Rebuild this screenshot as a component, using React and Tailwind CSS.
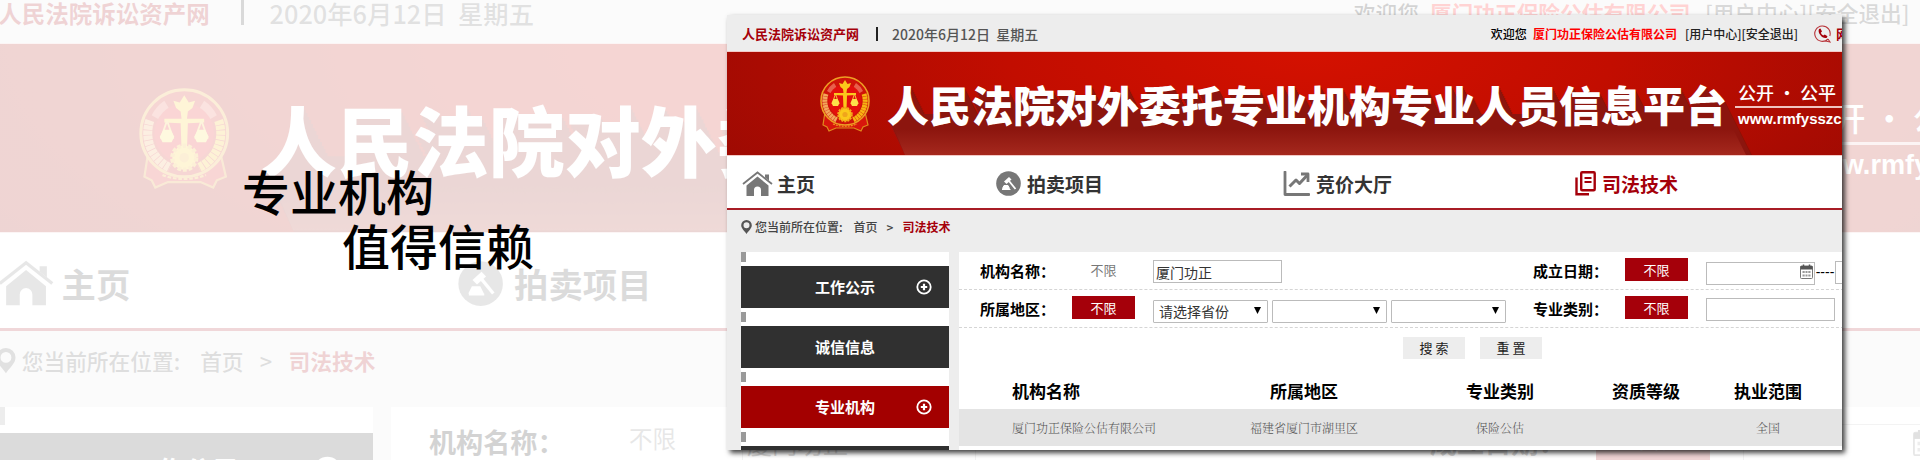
import React, { useId } from "react";

const sans = "font-['Noto_Sans_CJK_SC','Open_Sans',sans-serif]";

/* Diagonal long shadow cast by the banner title. */
const longShadow = Array.from({ length: 30 }, (_, i) => `${i + 1}px ${(i + 1) * 2}px 0 #8c150e`).join(",");

function Emblem() {
  return (
    <svg viewBox="0 0 50 56" className="relative h-[56px] w-[50px] shrink-0" aria-hidden="true">
      <path d="M5 36 L3 49 L7 51 L9 55 L16 52 L34 52 L41 55 L43 51 L48 49 L45 36 Z" fill="#d8150c" stroke="#e08a1c" strokeWidth="1.2" />
      <circle cx="25" cy="25" r="24" fill="#cf1409" stroke="#eda024" strokeWidth="1.6" />
      <path d="M14 7 A21 21 0 0 0 7 15 L12 18 A16 16 0 0 1 17 12 Z M36 7 A21 21 0 0 1 43 15 L38 18 A16 16 0 0 0 33 12 Z" fill="#e8604c" />
      <path d="M6 18 A21 21 0 0 0 17 44" fill="none" stroke="#f3a65a" strokeWidth="5" strokeDasharray="2.4 .4" />
      <path d="M44 18 A21 21 0 0 1 33 44" fill="none" stroke="#f7b512" strokeWidth="5" strokeDasharray="2.4 .4" />
      <circle cx="25" cy="25" r="16.5" fill="#e30f0c" />
      <path d="M25 4 L27.5 8 L31 7 L29.5 11 L27 13 L26.5 17 L36 17 L36 19 L27 19.5 L26.5 34 L23.5 34 L23 19.5 L14 19 L14 17 L23.5 17 L23 13 L20.5 11 L19 7 L22.5 8 Z" fill="#fbc81b" />
      <path d="M15.5 18 L12 28 M15.5 18 L19 28 M34.5 18 L31 28 M34.5 18 L38 28" stroke="#f7c33a" strokeWidth="1" />
      <path d="M13.5 23 H17.5 L19.5 27 L18 30 H13 L11.5 27 Z M32.5 23 H36.5 L38.5 27 L37 30 H32 L30.5 27 Z" fill="#fde04a" />
      <circle cx="25" cy="38.5" r="6.6" fill="#fbc81b" stroke="#f3a81a" strokeWidth="2.4" strokeDasharray="2 1" />
      <circle cx="25" cy="38.5" r="2.6" fill="#f0a51c" />
      <path d="M13 48 C20 51 30 51 37 48" fill="none" stroke="#f0a020" strokeWidth="1.2" strokeDasharray="2 1" />
    </svg>
  );
}

function HomeIcon() {
  return (
    <svg viewBox="0 0 31 26" className="h-[26px] w-[31px]" aria-hidden="true">
      <path d="M1 13 L15.5 1.5 L30 13" fill="none" stroke="#777" strokeWidth="1.8" />
      <path d="M23 3.5 H27 V9.5 L23 6.5 Z" fill="#777" />
      <path d="M15.5 5.5 L26.5 14.5 V25 H19 V19 A3.5 3.5 0 0 0 12 19 V25 H4.5 V14.5 Z" fill="#777" />
    </svg>
  );
}

function GavelIcon() {
  return (
    <svg viewBox="0 0 25 25" className="size-[25px]" aria-hidden="true">
      <circle cx="12.5" cy="12.5" r="12.3" fill="#777" />
      <path d="M8 10.5 L13 6 L15.5 8.5 L10.5 13 Z" fill="#fff" />
      <path d="M13 10 L19.5 18" stroke="#fff" strokeWidth="1.8" />
      <path d="M8 14.5 H12 L13.5 17.5 H6.5 Z M6 18.5 H14.5" fill="#fff" stroke="#fff" strokeWidth="1" />
    </svg>
  );
}

function ChartIcon() {
  return (
    <svg viewBox="0 0 27 25" className="h-[25px] w-[27px]" fill="none" stroke="#777" aria-hidden="true">
      <path d="M2 1 V23.5 H26" strokeWidth="2.8" strokeLinecap="round" strokeLinejoin="round" />
      <path d="M6.5 15.5 L13 9 L16.5 12.5 L24 4.5" strokeWidth="3" strokeLinejoin="round" />
      <path d="M18 3 H25 V11" strokeWidth="2.8" strokeLinejoin="round" />
    </svg>
  );
}

function DocsIcon() {
  return (
    <svg viewBox="0 0 21 25" className="h-[25px] w-[21px]" fill="none" stroke="#a5000a" aria-hidden="true">
      <rect x="6.2" y="1.2" width="13.5" height="18" rx="1" strokeWidth="2.4" />
      <path d="M9.5 7 H16.5 M9.5 11 H16.5" strokeWidth="1.8" />
      <path d="M1.5 6.5 V23.3 H14" strokeWidth="2.4" />
    </svg>
  );
}

function PlusIcon() {
  return (
    <svg viewBox="0 0 16 16" className="size-[16px]" fill="none" stroke="#fff" strokeWidth="1.8" aria-hidden="true">
      <circle cx="8" cy="8" r="6.7" />
      <path d="M8 4.8 V11.2 M4.8 8 H11.2" strokeWidth="2.2" />
    </svg>
  );
}

function PinIcon() {
  return (
    <svg viewBox="0 0 11 14" className="h-[14px] w-[11px]" aria-hidden="true">
      <path d="M5.5 0 A5.3 5.3 0 0 1 10.8 5.3 C10.8 8.5 7.5 11 5.5 14 C3.5 11 .2 8.5 .2 5.3 A5.3 5.3 0 0 1 5.5 0 Z M5.5 2.2 A3 3 0 1 0 5.5 8.2 A3 3 0 1 0 5.5 2.2 Z" fill="#555" fillRule="evenodd" />
    </svg>
  );
}

function PhoneIcon() {
  return (
    <svg viewBox="0 0 17 18" className="h-[18px] w-[17px]" aria-hidden="true">
      <path d="M14 14 A7.7 7.7 0 1 1 15.8 11 M14 14 L16 17 L11.5 16" fill="none" stroke="#b8343a" strokeWidth="1.1" />
      <path d="M5 4 L6.5 3.5 L8 6.5 L6.8 7.8 C7.3 9 8.2 10 9.4 10.6 L10.7 9.5 L13.5 11.2 L12.8 12.8 C9 14.5 3 8 5 4 Z" fill="#a5000a" />
    </svg>
  );
}

function CalendarIcon() {
  return (
    <svg viewBox="0 0 13 15" className="h-[15px] w-[13px]" aria-hidden="true">
      <rect x=".5" y="2" width="12" height="12.5" rx="1" fill="#fff" stroke="#777" />
      <path d="M.5 2 H12.5 V5.5 H.5 Z" fill="#555" />
      <path d="M3.5 .5 V3 M9.5 .5 V3" stroke="#555" strokeWidth="1.5" />
      <path d="M2.5 8 H4.7 M5.5 8 H7.5 M8.3 8 H10.5 M2.5 11.5 H4.7 M5.5 11.5 H7.5 M8.3 11.5 H10.5" stroke="#999" strokeWidth="2" />
    </svg>
  );
}

const navItems = [
  { label: "主页", Icon: HomeIcon, gap: "gap-1" },
  { label: "拍卖项目", Icon: GavelIcon, gap: "gap-1.5" },
  { label: "竞价大厅", Icon: ChartIcon, gap: "gap-1.5" },
  { label: "司法技术", Icon: DocsIcon, gap: "gap-1.5", active: true },
];

const sideItems = [
  { label: "工作公示", more: true },
  { label: "诚信信息" },
  { label: "专业机构", more: true, active: true },
  { label: "" },
];

const field = "h-[23px] shrink-0 border border-[#bbb] bg-white text-[14px] text-[#333]";

function AnyButton({ on }) {
  return (
    <button
      type="button"
      className={`h-[23px] w-[63px] text-[13px] leading-[22px] ${on ? "bg-[#a5000a] text-white" : "text-[#777]"}`}
    >
      不限
    </button>
  );
}

function Dropdown({ id, label, options }) {
  return (
    <div className="relative w-[115px] shrink-0">
      <select id={id} aria-label={label} className={`${field} w-full appearance-none rounded-[1px] pl-[5px] pr-5`}>
        {options.map((o) => (
          <option key={o}>{o}</option>
        ))}
      </select>
      <svg viewBox="0 0 7 7" className="pointer-events-none absolute right-[7px] top-[9px] size-[7px]" aria-hidden="true">
        <path d="M0 0 H7 L3.5 7 Z" fill="#000" />
      </svg>
    </div>
  );
}

const row = "grid h-[38px] grid-cols-[92px_81px_380px_92px_81px_1fr] items-start border-b border-dashed border-[#d5d5d5] pl-[21px] pt-[6px]";
const rowLabel = "text-[15px] font-bold leading-[26px] text-black";

function Site() {
  const uid = useId();
  return (
    <div className={`min-w-[1122px] bg-[#ededed] ${sans}`}>
      <div className="flex h-[36px] items-center whitespace-nowrap pl-[15px] pt-[2px] text-[12px] leading-[20px]">
        <a href="#home" className="text-[13px] font-bold text-[#a5000a]">人民法院诉讼资产网</a>
        <span className="ml-[17px] h-[14px] w-[2px] bg-[#222]" />
        <span className="ml-[14px] whitespace-pre text-[14px] font-medium text-[#555]">2020年6月12日  星期五</span>
        <span className="ml-auto font-medium text-black">欢迎您</span>
        <a href="#company" className="ml-1.5 font-bold text-[#ff0000]">厦门功正保险公估有限公司</a>
        <a href="#user" className="ml-2 font-medium text-[#222]">[用户中心]</a>
        <a href="#logout" className="font-medium text-[#222]">[安全退出]</a>
        <span className="ml-[16px]"><PhoneIcon /></span>
        <span className="ml-[5px] text-[13px] font-bold text-[#a5000a]">网</span>
      </div>

      <div className="relative flex h-[105px] items-center overflow-hidden border-y border-[#f3c9c6] bg-[radial-gradient(ellipse_60%_220%_at_52%_0%,#d41100_0%,#c20d00_45%,#9d0a03_100%)] pl-[93px]">
        <svg viewBox="0 0 1122 103" className="absolute left-0 top-0 h-[103px] w-[1122px]" aria-hidden="true">
          <path d="M165 74 L178 103 H1019 L998 62 H180 Z" fill="#8c150e" />
        </svg>
        <Emblem />
        <h2 className="relative ml-[17px] shrink-0 whitespace-nowrap text-[42px] font-black leading-[60px] text-white" style={{ textShadow: longShadow }}>
          人民法院对外委托专业机构专业人员信息平台
        </h2>
        <svg viewBox="0 0 1122 103" className="absolute left-0 top-0 h-[103px] w-[1122px]" aria-hidden="true">
          <defs>
            <linearGradient id={`${uid}-fade`} x1="0" y1="0" x2="0" y2="1">
              <stop offset="0" stopColor="#a5281d" stopOpacity="0" />
              <stop offset="1" stopColor="#a5281d" stopOpacity="1" />
            </linearGradient>
          </defs>
          <path d="M167 77 L178 103 H1019 L1006 77 Z" fill={`url(#${uid}-fade)`} />
        </svg>
        <div className="relative ml-[8px] flex-1 whitespace-nowrap font-medium text-white">
          <p className="border-b-2 border-[#f0c4c0] pl-[3px] text-[18px] leading-[28px]">公开 · 公平</p>
          <p className="pl-[3px] font-['Liberation_Sans',Arial,sans-serif] text-[15px] font-bold leading-[22px]">www.rmfysszc</p>
        </div>
      </div>

      <nav className="grid h-[54px] grid-cols-[254fr_287fr_292fr_259fr] items-center border-b-2 border-[#a81c25] bg-white px-[15px] pt-[3px]">
        {navItems.map(({ label, Icon, gap, active }) => (
          <a key={label} href="#nav" className={`flex items-center text-[19px] font-bold leading-[28px] ${gap} ${active ? "text-[#a5000a]" : "text-[#333]"}`}>
            <Icon />
            {label}
          </a>
        ))}
      </nav>

      <div className="flex h-[42px] items-center pb-[9px] pl-[14px] text-[12px] font-medium leading-[20px] text-[#444]">
        <PinIcon />
        <span className="ml-[3px]">您当前所在位置:</span>
        <a href="#home" className="ml-[11px]">首页</a>
        <span className="ml-[9px]">&gt;</span>
        <a href="#tech" className="ml-[9px] font-bold text-[#a5000a]">司法技术</a>
      </div>

      <div className="flex gap-[10px] pl-[14px]">
        <aside className="w-[208px] shrink-0 bg-white">
          {sideItems.map(({ label, more, active }, i) => (
            <div key={i} className="pb-[4px]">
              <span className="mb-[4px] block h-[10px] w-[5px] bg-[#999]" />
              <a href="#side" className={`grid h-[42px] grid-cols-[1fr_50px] items-center text-[15px] font-bold text-white ${active ? "bg-[#a30000]" : "bg-[#303030]"}`}>
                <span className="pl-[50px] text-center">{label}</span>
                {more && <span className="pl-[17px]"><PlusIcon /></span>}
              </a>
            </div>
          ))}
        </aside>

        <main className="min-w-0 flex-1 bg-white">
          <form onSubmit={(e) => e.preventDefault()}>
            <div className={row}>
              <label htmlFor={`${uid}-name`} className={rowLabel}>机构名称：</label>
              <AnyButton />
              <div className="flex pt-[2px]">
                <input id={`${uid}-name`} type="text" defaultValue="厦门功正" className={`${field} w-[129px] px-[2px]`} />
              </div>
              <label htmlFor={`${uid}-from`} className={rowLabel}>成立日期：</label>
              <AnyButton on />
              <div className="flex items-center pt-[2px]">
                <div className="relative w-[109px] shrink-0">
                  <input id={`${uid}-from`} type="text" className={`${field} w-full pl-[2px] pr-[18px]`} />
                  <span className="absolute right-[2px] top-[4px]"><CalendarIcon /></span>
                </div>
                <span className="w-[20px] shrink-0 text-center font-['Liberation_Sans',sans-serif] text-[14px] leading-[20px] text-black">----</span>
                <input type="text" aria-label="结束日期" className={`${field} w-[109px]`} />
              </div>
            </div>
            <div className={row}>
              <label htmlFor={`${uid}-area`} className={rowLabel}>所属地区：</label>
              <AnyButton on />
              <div className="flex gap-1 pt-[2px]">
                <Dropdown id={`${uid}-area`} options={["请选择省份"]} />
                <Dropdown label="城市" options={[""]} />
                <Dropdown label="区县" options={[""]} />
              </div>
              <label htmlFor={`${uid}-type`} className={rowLabel}>专业类别：</label>
              <AnyButton on />
              <div className="flex pt-[2px]">
                <input id={`${uid}-type`} type="text" className={`${field} w-[129px]`} />
              </div>
            </div>
            <div className="flex gap-[15px] pl-[444px] pt-[9px]">
              <button type="submit" className="h-[22px] w-[62px] bg-[#ededed] text-[13px] leading-[22px] text-[#222]">搜 索</button>
              <button type="reset" className="h-[22px] w-[62px] bg-[#ededed] text-[13px] leading-[22px] text-[#222]">重 置</button>
            </div>
          </form>

          <table className="mt-[12px] w-full table-fixed border-collapse text-center">
            <colgroup>
              <col className="w-[235px]" />
              <col className="w-[220px]" />
              <col className="w-[172px]" />
              <col className="w-[120px]" />
              <col className="w-[124px]" />
              <col />
            </colgroup>
            <thead>
              <tr className="h-[38px] text-[17px] leading-[24px] text-black">
                <th className="pl-[53px] pt-[2px] text-left">机构名称</th>
                <th className="pt-[2px]">所属地区</th>
                <th className="pt-[2px]">专业类别</th>
                <th className="pt-[2px]">资质等级</th>
                <th className="pt-[2px]">执业范围</th>
                <th />
              </tr>
            </thead>
            <tbody>
              <tr className="h-[37px] bg-[#e4e4e4] font-['Noto_Serif_CJK_SC','Noto_Sans_CJK_SC',serif] text-[12px] font-light text-[#555]">
                <td className="pl-[53px] text-left">厦门功正保险公估有限公司</td>
                <td>福建省厦门市湖里区</td>
                <td>保险公估</td>
                <td />
                <td>全国</td>
                <td />
              </tr>
            </tbody>
          </table>
        </main>
      </div>
    </div>
  );
}

export default function App() {
  return (
    <section className={`relative flex overflow-hidden bg-white pb-[10px] pt-[15px] ${sans}`}>
      <div className="absolute inset-0 overflow-hidden opacity-[.17]" aria-hidden="true" inert>
        <div className="-ml-[16px] -mt-[12px] [zoom:1.81]">
          <Site />
        </div>
      </div>

      <div className="relative w-0 flex-[727]">
        <h1 className="whitespace-nowrap pl-[242px] pt-[148px] text-[48px] font-medium leading-[54px] text-black">
          <span className="block">专业机构</span>
          <span className="block pl-[100px]">值得信赖</span>
        </h1>
      </div>

      <div className="relative mr-[78px] max-h-[435px] w-0 flex-[1115] overflow-hidden shadow-[3px_3px_5px_rgba(0,0,0,0.75)]">
        <Site />
      </div>
    </section>
  );
}
